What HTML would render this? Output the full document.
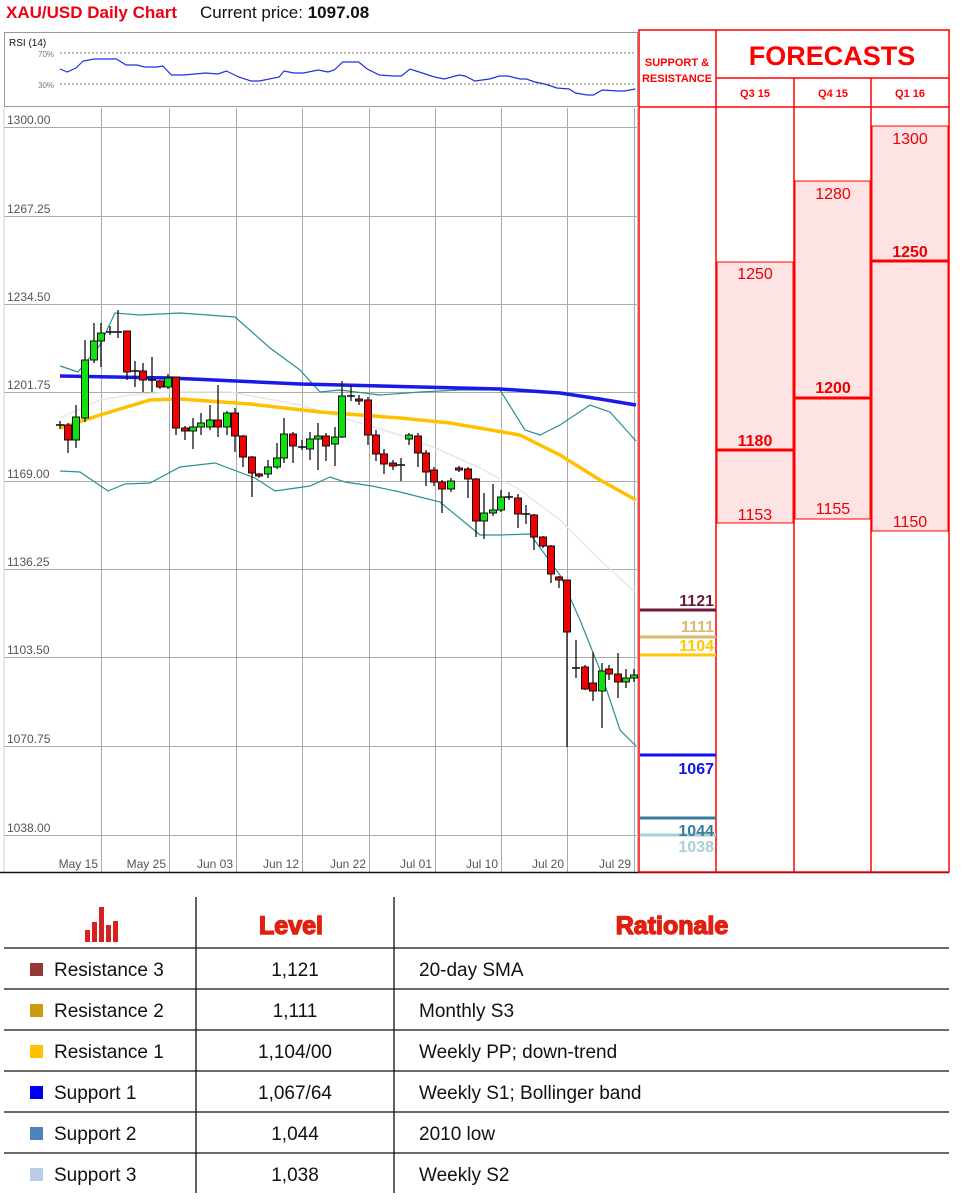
<!DOCTYPE html>
<html><head><meta charset="utf-8"><style>
body{margin:0;background:#fff;width:967px;height:1200px;overflow:hidden;position:relative;font-family:"Liberation Sans",sans-serif}
.a{position:absolute;white-space:nowrap}
</style></head><body>
<div class="a" style="left:6px;top:3px;font-size:17px;font-weight:bold;color:#f00010">XAU/USD Daily Chart</div>
<div class="a" style="left:200px;top:3px;font-size:17px;color:#111">Current price: <b>1097.08</b></div>

<svg class="a" style="left:0;top:0" width="967" height="1200" id="s">
<rect x="4.5" y="32.5" width="633" height="74" fill="#fff" stroke="#999"/>
<text x="9" y="46" font-size="10" fill="#111" font-family="Liberation Sans">RSI (14)</text>
<text x="38" y="57" font-size="8" fill="#777" font-family="Liberation Sans">70%</text>
<text x="38" y="88" font-size="8" fill="#777" font-family="Liberation Sans">30%</text>
<line x1="60" y1="53" x2="636" y2="53" stroke="#777" stroke-dasharray="2,2"/>
<line x1="60" y1="84" x2="636" y2="84" stroke="#777" stroke-dasharray="2,2"/>
<polyline id="rsi" fill="none" stroke="#2030e0" stroke-width="1.2"/>
<g id="grid" stroke="#aaa" stroke-width="1"></g>
<g id="lbl" font-family="Liberation Sans" font-size="12" fill="#555"></g>
<line x1="4" y1="108" x2="4" y2="872" stroke="#ccc"/>
<polyline points="60,418 100,400 130,395 170,392 230,392 300,405 350,420 400,435 440,450 480,468 520,490 560,520 600,560 636,593" fill="none" stroke="#e6e6e6" stroke-width="1.5"/>
<polyline points="60,366 78,372 100,345 115,313 140,315 180,313 235,317 270,348 300,370 320,392 340,390 380,395 420,392 460,390 500,390 525,430 540,435 560,425 590,405 610,412 636,441" fill="none" stroke="#2a9090" stroke-width="1.2"/>
<polyline points="60,471 80,472 108,491 125,484 150,483 180,467 215,463 255,478 275,491 310,486 330,477 345,482 372,486 400,492 440,502 480,535 500,535 530,534 560,575 580,620 600,670 620,730 636,746" fill="none" stroke="#2a9090" stroke-width="1.2"/>
<polyline points="60,376 170,378 300,384 420,387 500,389 560,393 600,399 636,405" fill="none" stroke="#1a1ae8" stroke-width="3.5"/>
<polyline points="60,428 100,415 150,400 180,399 250,404 320,412 400,418 450,423 520,435 560,455 600,480 636,500" fill="none" stroke="#ffc000" stroke-width="3.5"/>
<g id="cd"></g>
<line x1="0" y1="872.5" x2="949" y2="872.5" stroke="#111" stroke-width="1.5"/>
<g stroke="#f00" stroke-width="1.5" fill="none">
<rect x="639" y="30" width="310" height="842"/>
<line x1="716" y1="30" x2="716" y2="872"/>
<line x1="794" y1="78" x2="794" y2="872"/>
<line x1="871" y1="78" x2="871" y2="872"/>
<line x1="716" y1="78" x2="949" y2="78"/>
<line x1="639" y1="107" x2="949" y2="107"/>
</g>
<rect x="717" y="262" width="76" height="261" fill="#fde3e3" stroke="#f00" stroke-width="1"/>
<rect x="795" y="181" width="75" height="338" fill="#fde3e3" stroke="#f00" stroke-width="1"/>
<rect x="872" y="126" width="76" height="405" fill="#fde3e3" stroke="#f00" stroke-width="1"/>
<line x1="717" y1="450" x2="793" y2="450" stroke="#f00" stroke-width="3"/>
<line x1="795" y1="398" x2="870" y2="398" stroke="#f00" stroke-width="3"/>
<line x1="872" y1="261" x2="948" y2="261" stroke="#f00" stroke-width="3"/>
<g font-family="Liberation Sans" fill="#f00" text-anchor="middle">
<text x="677" y="66" font-size="11" font-weight="bold">SUPPORT &amp;</text>
<text x="677" y="82" font-size="11" font-weight="bold">RESISTANCE</text>
<text x="832" y="65" font-size="27" font-weight="bold">FORECASTS</text>
<text x="755" y="97" font-size="11" font-weight="bold">Q3 15</text>
<text x="833" y="97" font-size="11" font-weight="bold">Q4 15</text>
<text x="910" y="97" font-size="11" font-weight="bold">Q1 16</text>
<g font-size="16" fill="#e00">
<text x="755" y="279">1250</text><text x="755" y="446" font-weight="bold">1180</text><text x="755" y="520">1153</text>
<text x="833" y="199">1280</text><text x="833" y="393" font-weight="bold">1200</text><text x="833" y="514">1155</text>
<text x="910" y="144">1300</text><text x="910" y="257" font-weight="bold">1250</text><text x="910" y="527">1150</text>
</g>
</g>
<g stroke-width="3">
<line x1="640" y1="610" x2="716" y2="610" stroke="#6b1a3a"/>
<line x1="640" y1="637" x2="716" y2="637" stroke="#d9b96a"/>
<line x1="640" y1="655" x2="716" y2="655" stroke="#ffc800"/>
<line x1="640" y1="755" x2="716" y2="755" stroke="#1010f0"/>
<line x1="640" y1="818" x2="716" y2="818" stroke="#3a7a9c"/>
<line x1="640" y1="835" x2="716" y2="835" stroke="#a8d0d4"/>
</g>
<g font-family="Liberation Sans" font-size="16" font-weight="bold" text-anchor="end">
<text x="714" y="606" fill="#6b1a3a">1121</text>
<text x="714" y="632" fill="#d9b96a">1111</text>
<text x="714" y="651" fill="#ffc800">1104</text>
<text x="714" y="774" fill="#1010f0">1067</text>
<text x="714" y="836" fill="#3a7a9c">1044</text>
<text x="714" y="852" fill="#a8d0d4">1038</text>
</g>
<g stroke="#111" stroke-width="1.3">
<line x1="196" y1="897" x2="196" y2="1193"/><line x1="394" y1="897" x2="394" y2="1193"/>
<line x1="4" y1="948" x2="949" y2="948"/><line x1="4" y1="989" x2="949" y2="989"/>
<line x1="4" y1="1030" x2="949" y2="1030"/><line x1="4" y1="1071" x2="949" y2="1071"/>
<line x1="4" y1="1112" x2="949" y2="1112"/><line x1="4" y1="1153" x2="949" y2="1153"/>
</g>
<g fill="#d92020">
<rect x="85" y="930" width="5" height="12"/><rect x="92" y="922" width="5" height="20"/><rect x="99" y="907" width="5" height="35"/><rect x="106" y="925" width="5" height="17"/><rect x="113" y="921" width="5" height="21"/>
</g>
<g font-family="Liberation Sans" font-weight="900" font-size="25" fill="#e02010" text-anchor="middle" stroke="#e02010" stroke-width="1.4">
<text x="291" y="934">Level</text><text x="672" y="934">Rationale</text>
</g>
<g font-family="Liberation Sans" font-size="19" fill="#111">
<rect x="30" y="963" width="13" height="13" fill="#953735"/><text x="54" y="976">Resistance 3</text><text x="295" y="976" text-anchor="middle">1,121</text><text x="419" y="976">20-day SMA</text>
<rect x="30" y="1004" width="13" height="13" fill="#cc9a10"/><text x="54" y="1017">Resistance 2</text><text x="295" y="1017" text-anchor="middle">1,111</text><text x="419" y="1017">Monthly S3</text>
<rect x="30" y="1045" width="13" height="13" fill="#ffc000"/><text x="54" y="1058">Resistance 1</text><text x="295" y="1058" text-anchor="middle">1,104/00</text><text x="419" y="1058">Weekly PP; down-trend</text>
<rect x="30" y="1086" width="13" height="13" fill="#0000f0"/><text x="54" y="1099">Support 1</text><text x="295" y="1099" text-anchor="middle">1,067/64</text><text x="419" y="1099">Weekly S1; Bollinger band</text>
<rect x="30" y="1127" width="13" height="13" fill="#4f81bd"/><text x="54" y="1140">Support 2</text><text x="295" y="1140" text-anchor="middle">1,044</text><text x="419" y="1140">2010 low</text>
<rect x="30" y="1168" width="13" height="13" fill="#b8cce4"/><text x="54" y="1181">Support 3</text><text x="295" y="1181" text-anchor="middle">1,038</text><text x="419" y="1181">Weekly S2</text>
</g>
</svg>
<script>
var N="http://www.w3.org/2000/svg";
function el(p,t,a){var e=document.createElementNS(N,t);for(var k in a)e.setAttribute(k,a[k]);p.appendChild(e);return e}
var r=[[49,69],[55,72],[62,68],[68,61],[77,59],[95,59],[103,65],[112,65],[118,67],[128,67],[133,66],[140,75],[150,75],[168,73],[178,74],[185,71],[195,77],[205,81],[212,81],[228,77],[232,71],[240,73],[248,73],[260,70],[268,72],[273,70],[280,62],[293,62],[300,69],[310,75],[322,76],[328,76],[335,69],[345,73],[355,77],[363,79],[375,75],[380,76],[388,81],[400,79],[408,76],[415,76],[425,79],[430,79],[437,82],[445,84],[455,88],[465,89],[470,93],[480,95],[485,95],[492,90],[505,91],[510,91],[519,89]];
document.getElementById('rsi').setAttribute('points',r.map(function(p){return (p[0]*1.224).toFixed(1)+','+p[1]}).join(' '));
var g=document.getElementById('grid'),l=document.getElementById('lbl');
var ys=[127,216,304,392,481,569,657,746,835],lab=["1300.00","1267.25","1234.50","1201.75","1169.00","1136.25","1103.50","1070.75","1038.00"];
ys.forEach(function(y,i){el(g,'line',{x1:4,x2:637,y1:y+.5,y2:y+.5});var t=el(l,'text',{x:7,y:y-3});t.textContent=lab[i];});
var xs=[101,169,236,302,369,435,501,567,634],dl=["May 15","May 25","Jun 03","Jun 12","Jun 22","Jul 01","Jul 10","Jul 20","Jul 29"];
xs.forEach(function(x,i){el(g,'line',{x1:x+.5,x2:x+.5,y1:108,y2:872});var t=el(l,'text',{x:x-3,y:868,'text-anchor':'end'});t.textContent=dl[i];});
el(g,'line',{x1:637.5,x2:637.5,y1:108,y2:872,stroke:'#bbb'});
var c=[[60,424,426,421,429,'d'],[68,425,440,423,453,'r'],[76,417,440,405,448,'g'],[85,360,418,340,422,'g'],[94,341,360,323,363,'g'],[101,333,341,323,367,'g'],[110,331,333,326,335,'d'],[118,331,333,310,338,'d'],[127,331,372,331,380,'r'],[135,370,372,361,387,'d'],[143,371,380,363,392,'r'],[152,379,381,357,392,'d'],[160,381,387,380,389,'r'],[168,378,387,374,389,'g'],[176,377,428,377,435,'r'],[185,428,431,426,440,'r'],[193,427,431,418,449,'g'],[201,423,427,413,435,'g'],[210,420,427,405,430,'g'],[218,420,427,385,437,'r'],[227,413,427,411,435,'g'],[235,413,436,408,452,'r'],[243,436,457,435,467,'r'],[252,457,473,456,497,'r'],[259,474,476,473,478,'r'],[268,467,474,460,478,'g'],[277,458,467,443,469,'g'],[284,434,458,418,463,'g'],[293,434,446,432,463,'r'],[302,446,448,440,450,'d'],[310,439,449,432,460,'g'],[318,436,439,423,470,'g'],[326,436,446,433,461,'r'],[335,437,444,427,466,'g'],[342,396,437,381,438,'g'],[351,395,397,385,401,'d'],[359,399,400,395,405,'r'],[368,400,435,397,445,'r'],[376,435,454,430,461,'r'],[384,454,464,449,474,'r'],[393,463,466,460,470,'r'],[401,464,466,458,481,'d'],[409,435,439,433,445,'g'],[418,436,453,433,467,'r'],[426,453,472,450,486,'r'],[434,470,482,467,486,'r'],[442,482,489,480,513,'r'],[451,481,489,478,492,'g'],[459,468,469,466,472,'r'],[468,469,479,467,498,'r'],[476,479,521,478,537,'r'],[484,513,521,493,539,'g'],[493,510,513,484,516,'g'],[501,497,510,490,512,'g'],[509,496,498,492,500,'d'],[518,498,514,494,528,'r'],[526,513,515,505,524,'d'],[534,515,537,514,550,'r'],[543,537,546,536,548,'r'],[551,546,574,545,583,'r'],[559,577,580,576,588,'r'],[567,580,632,580,747,'r'],[576,667,669,640,678,'d'],[585,667,689,665,690,'r'],[593,683,691,652,701,'r'],[602,671,691,663,728,'g'],[609,669,674,665,680,'r'],[618,674,682,653,698,'r'],[626,678,682,669,688,'g'],[634,675,678,669,682,'g']];
var cd=document.getElementById('cd');
c.forEach(function(k){var x=k[0];el(cd,'line',{x1:x,x2:x,y1:k[3],y2:k[4],stroke:'#111','stroke-width':1.3});
if(k[5]=='d'){el(cd,'line',{x1:x-4,x2:x+4,y1:(k[1]+k[2])/2,y2:(k[1]+k[2])/2,stroke:'#111','stroke-width':1.6});}
else el(cd,'rect',{x:x-3.5,y:k[1],width:7,height:Math.max(2,k[2]-k[1]),fill:k[5]=='r'?'#f00000':'#10e010',stroke:'#111','stroke-width':1});});
</script>
</body></html>
